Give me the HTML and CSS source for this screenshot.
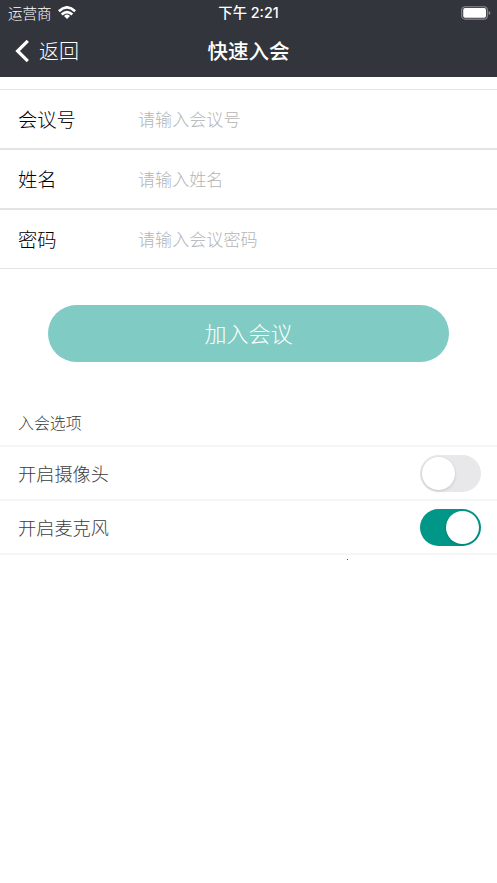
FILE: index.html
```html
<!DOCTYPE html>
<html lang="zh-CN">
<head>
<meta charset="utf-8">
<title>快速入会</title>
<link rel="stylesheet" href="styles.css">
</head>
<body>
<header class="header">
  <div class="status">
    <div class="carrier"><span>运营商</span>
      <svg class="wifi" viewBox="0 0 18 13" width="18" height="13"><g fill="none" stroke="#fff" stroke-width="2.7"><path d="M.9 5.2Q9-2.4 17.1 5.2"/><path d="M3.7 8.5Q9 3.6 14.3 8.5"/></g><path d="M6 10Q9 7.2 12 10L9 12.9Z" fill="#fff"/></svg>
    </div>
    <div class="time">下午 2:21</div>
    <svg class="battery" viewBox="0 0 30 14" width="30" height="14"><rect x=".7" y=".7" width="25.6" height="12.4" rx="3.4" fill="none" stroke="#8b8d91" stroke-width="1.1"/><rect x="2.2" y="2.1" width="22.8" height="9.7" rx="1.8" fill="#fff"/><path d="M27.6 5v4q1.8-.6 1.8-2t-1.8-2z" fill="#8b8d91"/></svg>
  </div>
  <nav class="nav">
    <div class="back"><svg viewBox="0 0 14 24" width="14" height="24"><path d="M12.8 1.9 2.6 12l10.2 10.1" fill="none" stroke="#fff" stroke-width="3.2"/></svg><span>返回</span></div>
    <h1 class="title">快速入会</h1>
  </nav>
</header>
<main>
  <form class="form">
    <label class="field"><span class="name">会议号</span><input class="input" placeholder="请输入会议号"></label>
    <label class="field"><span class="name">姓名</span><input class="input" placeholder="请输入姓名"></label>
    <label class="field"><span class="name">密码</span><input class="input" placeholder="请输入会议密码"></label>
  </form>
  <button class="join" type="button">加入会议</button>
  <section class="options">
    <h2 class="heading">入会选项</h2>
    <div class="option"><span>开启摄像头</span><div class="switch"><i class="knob"></i></div></div>
    <div class="option"><span>开启麦克风</span><div class="switch on"><i class="knob"></i></div></div>
  </section>
  <div class="dot"></div>
</main>
</body>
</html>
```
FILE: styles.css
```css
* { box-sizing: border-box; }
body {
  margin: 0;
  min-height: 883px;
  background: #fff;
  color: #000;
  font-family: "Noto Sans CJK SC", sans-serif;
  font-weight: 300;
}
svg { display: block; }
.header { height: 77px; background: #32353c; color: #fff; }
.status {
  display: grid;
  grid-template-columns: 1fr auto 1fr;
  align-items: center;
  height: 25px;
  padding: 0 6px 0 8px;
  font-size: 14.5px;
  line-height: 25px;
}
.carrier { display: flex; align-items: center; gap: 6px; }
.carrier span { height: 26px; line-height: 25px; }
.wifi { margin-bottom: 2px; }
.time { padding: 0 2px 1px 0; font-family: Inter, "Noto Sans CJK SC", sans-serif; font-size: 14.3px; font-weight: 500; line-height: 24px; }
.battery { justify-self: end; }
.nav {
  display: grid;
  grid-template-columns: 1fr auto 1fr;
  align-items: center;
  height: 52px;
  padding: 0 15px;
}
.back { display: flex; align-items: center; gap: 10px; font-size: 20px; }
.back span, .title { padding-bottom: 2px; }
.title { margin: 0; font-size: 20.5px; font-weight: 500; }
.form { margin-top: 12px; border-top: 1px solid #e6e6e6; }
.field {
  display: flex;
  align-items: center;
  height: 60px;
  padding: 0 18px;
  border-bottom: 2px solid #e4e4e4;
}
.field:last-child { height: 59px; border-bottom-width: 1px; }
.name { width: 120px; font-size: 19.3px; }
.input {
  flex: 1;
  min-width: 0;
  padding: 0 0 2px;
  border: 0;
  outline: 0;
  background: none;
  font: 300 17.1px "Noto Sans CJK SC", sans-serif;
}
.input::placeholder { color: #b4b4b4; opacity: 1; }
.join {
  display: block;
  width: 401px;
  height: 57px;
  margin: 36px 0 0 48px;
  padding: 0 0 3px;
  border: 0;
  border-radius: 29px;
  background: #80cbc4;
  color: #fff;
  font: 300 22px "Noto Sans CJK SC", sans-serif;
}
.options { color: #3c3c3c; }
.heading {
  height: 85px;
  margin: 0;
  padding: 48px 18px 0;
  border-bottom: 2px solid #f6f6f6;
  font-size: 15.9px;
  font-weight: 300;
  line-height: 25px;
}
.option {
  display: flex;
  align-items: center;
  justify-content: space-between;
  height: 54px;
  padding: 0 16px 0 18px;
  border-bottom: 2px solid #f6f6f6;
  font-size: 18.2px;
}
.switch {
  display: flex;
  align-items: center;
  width: 61px;
  height: 37px;
  padding: 0 2px;
  border-radius: 19px;
  background: #e8e8ea;
}
.knob { width: 33px; height: 33px; border-radius: 50%; background: #fff; box-shadow: 0 1px 3px rgba(0, 0, 0, .16); }
.on { justify-content: flex-end; background: #009688; }
.dot { width: 1px; height: 1px; margin: 4px 0 0 347px; background: #456; }
```
